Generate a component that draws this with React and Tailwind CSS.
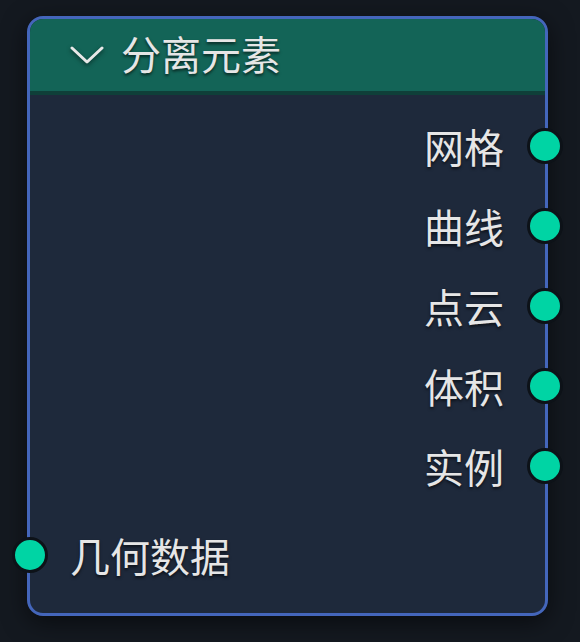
import React from 'react';

const outputs = ['网格', '曲线', '点云', '体积', '实例'];

const Socket = ({ side }) => (
    <span
        className={`absolute top-1/2 -translate-y-1/2 w-[36px] h-[36px] rounded-full bg-[#00d4a4] border-[3px] border-[#0d1218] ${
            side === 'right' ? 'right-[-18px]' : 'left-[-18px]'
        }`}
    />
);

const App = () => {
    return (
        <div className="w-[580px] h-[642px] bg-[#141920] pt-[16px] pl-[27px] font-['Noto_Sans_CJK_SC','Noto_Sans',sans-serif]">
            <div className="w-[521px] h-[600px] rounded-[16px] border-[3px] border-[#4466bb] bg-[#1e293b] shadow-[0_6px_24px_rgba(0,0,0,0.55)] flex flex-col">
                {/* Header */}
                <div className="h-[76px] shrink-0 bg-[#136457] border-b-[4px] border-[#0f3f39] rounded-t-[13px] flex items-center pl-[39px] gap-[16px]">
                    <svg width="36" height="24" viewBox="0 0 36 24" className="drop-shadow-[0_2px_2px_rgba(0,0,0,0.5)]">
                        <path d="M3 5 L18 19 L33 5" fill="none" stroke="#e8e8e8" strokeWidth="3" strokeLinecap="round" strokeLinejoin="round" />
                    </svg>
                    <span className="text-[40px] leading-none text-[#e6e6e6] [text-shadow:0_2px_3px_rgba(0,0,0,0.6)] pb-[4px]">
                        分离元素
                    </span>
                </div>

                {/* Body */}
                <div className="flex flex-col pt-[11px]">
                    {outputs.map((label) => (
                        <div key={label} className="relative h-[80px] flex items-center justify-end pr-[41px]">
                            <span className="text-[40px] leading-none text-[#e6e6e6] [text-shadow:0_2px_3px_rgba(0,0,0,0.6)]">
                                {label}
                            </span>
                            <Socket side="right" />
                        </div>
                    ))}
                    <div className="relative h-[80px] mt-[9px] flex items-center pl-[40px]">
                        <span className="text-[40px] leading-none text-[#e6e6e6] [text-shadow:0_2px_3px_rgba(0,0,0,0.6)]">
                            几何数据
                        </span>
                        <Socket side="left" />
                    </div>
                </div>
            </div>
        </div>
    );
};

export default App;
